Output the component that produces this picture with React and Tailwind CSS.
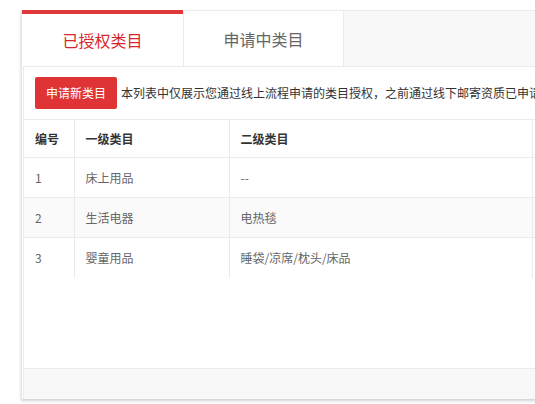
import React from "react";

const rows = [
  { id: 1, first: "床上用品", second: "--" },
  { id: 2, first: "生活电器", second: "电热毯" },
  { id: 3, first: "婴童用品", second: "睡袋/凉席/枕头/床品" },
];

export default function App() {
  return (
    <div
      className="min-h-screen bg-white pt-[10px] pl-[21px] overflow-hidden"
      style={{ fontFamily: '"Noto Sans CJK SC", "Noto Sans", sans-serif' }}
    >
      <div className="w-[540px] border-l border-[#e4e4e4] shadow-[0_2px_3px_rgba(0,0,0,0.18)]">
        {/* tabs */}
        <div className="flex h-[56px] border-t border-[#ebebeb] bg-[#f8f8f8]">
          <div className="w-[161px] bg-white border-t-4 border-[#e0393b] -mt-px flex items-center justify-center text-[16px] text-[#d9262c]">
            已授权类目
          </div>
          <div className="w-[161px] bg-white border-r border-l border-[#ebebeb] flex items-center justify-center text-[16px] text-[#666]">
            申请中类目
          </div>
        </div>

        {/* content */}
        <div className="ml-px border-l border-t border-[#ebebeb] bg-white h-[333px] flex flex-col">
          <div className="flex items-center px-[11px] pt-[10px] pb-[10px] whitespace-nowrap">
            <button className="h-[32px] w-[82px] shrink-0 rounded-[2px] bg-[#e03336] text-white text-[12px]">
              申请新类目
            </button>
            <span className="ml-[4px] text-[12px] text-[#333]">
              本列表中仅展示您通过线上流程申请的类目授权，之前通过线下邮寄资质已申请的类目不在此展示
            </span>
          </div>

          <table className="w-full border-collapse text-[12px] table-fixed">
            <colgroup>
              <col className="w-[50px]" />
              <col className="w-[155px]" />
              <col className="w-[303px]" />
              <col />
            </colgroup>
            <thead>
              <tr className="h-[38px] border-t border-[#ebebeb]">
                <th className="text-left font-bold text-[#333] pl-[11px] border-r border-[#ebebeb]">编号</th>
                <th className="text-left font-bold text-[#333] pl-[11px] border-r border-[#ebebeb]">一级类目</th>
                <th className="text-left font-bold text-[#333] pl-[11px] border-r border-[#ebebeb]">二级类目</th>
                <th></th>
              </tr>
            </thead>
            <tbody>
              {rows.map((r, i) => (
                <tr
                  key={r.id}
                  className={`h-[40px] ${i < rows.length - 1 ? "border-b" : ""} border-t border-[#ebebeb] ${i === 1 ? "bg-[#fafafa]" : "bg-white"}`}
                >
                  <td className="pl-[11px] text-[#666] border-r border-[#ebebeb]">{r.id}</td>
                  <td className="pl-[11px] text-[#666] border-r border-[#ebebeb]">{r.first}</td>
                  <td className="pl-[11px] text-[#666] border-r border-[#ebebeb]">{r.second}</td>
                  <td></td>
                </tr>
              ))}
            </tbody>
          </table>

          <div className="flex-1" />
          <div className="h-[31px] border-t border-[#ebebeb] bg-[#f8f8f8]" />
        </div>
      </div>
    </div>
  );
}
